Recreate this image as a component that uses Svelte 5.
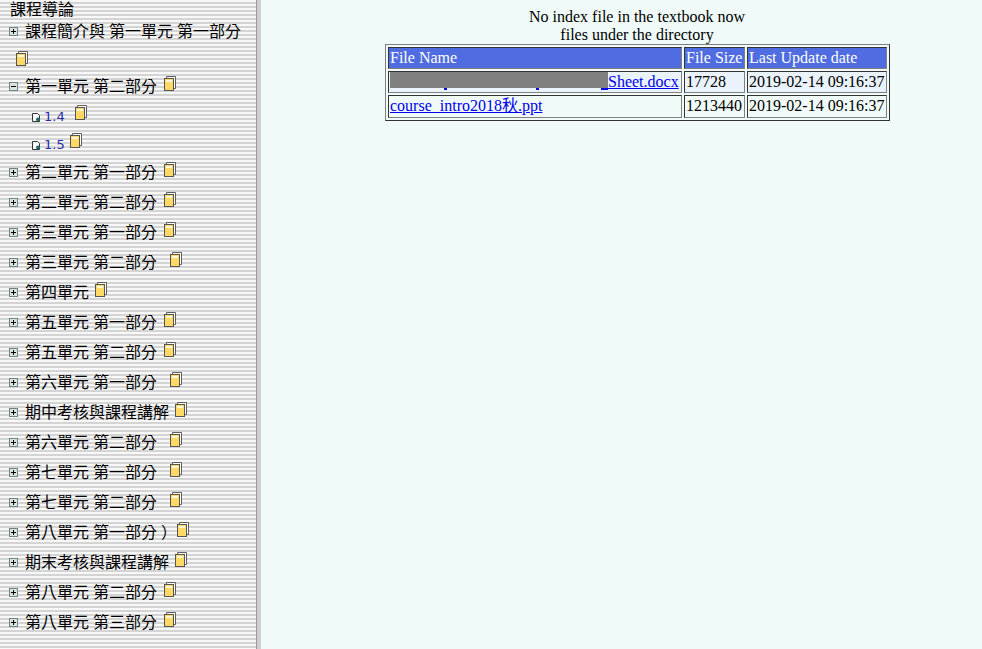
<script lang="ts">
  type Node = { label: string; gap?: number };

  const nodes: Node[] = [
    { label: '第二單元 第一部分' },
    { label: '第二單元 第二部分' },
    { label: '第三單元 第一部分' },
    { label: '第三單元 第二部分', gap: 13 },
    { label: '第四單元', gap: 6 },
    { label: '第五單元 第一部分' },
    { label: '第五單元 第二部分' },
    { label: '第六單元 第一部分', gap: 13 },
    { label: '期中考核與課程講解', gap: 6 },
    { label: '第六單元 第二部分', gap: 13 },
    { label: '第七單元 第一部分', gap: 13 },
    { label: '第七單元 第二部分', gap: 13 },
    { label: '第八單元 第一部分 ）', gap: 0 },
    { label: '期末考核與課程講解', gap: 6 },
    { label: '第八單元 第二部分' },
    { label: '第八單元 第三部分' }
  ];

  const files = [
    { size: 17728, date: '2019-02-14 09:16:37' },
    { size: 1213440, date: '2019-02-14 09:16:37' }
  ];
</script>

{#snippet book()}
  <svg class="book" width="12" height="15" viewBox="0 0 12 15">
    <path d="M2.5 2.5v-2h9v12h-2" fill="#fff" stroke="#5e5e5e" />
    <rect x=".5" y="2.5" width="9" height="12" fill="#ffd966" stroke="#555" />
    <rect x="2" y="4" width="6" height="2" fill="#fff8dc" />
  </svg>
{/snippet}

{#snippet toggle(open: boolean)}
  <svg class="toggle" width="9" height="9" viewBox="0 0 9 9">
    <rect x=".5" y=".5" width="8" height="8" fill="#dae2e2" stroke="#6f8585" />
    <path d={open ? 'M2 4.5h5' : 'M2 4.5h5M4.5 2v5'} stroke="#000" />
  </svg>
{/snippet}

{#snippet page()}
  <svg class="page" width="9" height="9" viewBox="0 0 9 9">
    <path d="M.5 .5h5l2 2v6h-7z" fill="#fff" stroke="#333" />
    <circle cx="6" cy="6.5" r="2" fill="#1c6b6b" />
  </svg>
{/snippet}

<div class="layout">
  <nav class="tree">
    <div class="title">課程導論</div>

    <div class="node first">
      <div class="line">{@render toggle(false)}<span class="label">課程簡介與 第一單元 第一部分</span></div>
      <div class="wrapped">{@render book()}</div>
    </div>

    <div class="node">
      {@render toggle(true)}<span class="label">第一單元 第二部分</span><span class="book-gap"></span>{@render book()}
    </div>
    <div class="leaf">
      {@render page()}<a href="#1.4">1.4</a><span class="leaf-book wide">{@render book()}</span>
    </div>
    <div class="leaf">
      {@render page()}<a href="#1.5">1.5</a><span class="leaf-book">{@render book()}</span>
    </div>

    {#each nodes as node}
      <div class="node">
        {@render toggle(false)}<span class="label">{node.label}</span><span class="book-gap" style="width: {node.gap ?? 7}px"></span>{@render book()}
      </div>
    {/each}
  </nav>

  <main class="content">
    <div class="notice">No index file in the textbook now<br />files under the directory</div>
    <table>
      <thead>
        <tr>
          <th class="col-name">File Name</th>
          <th class="col-size">File Size</th>
          <th class="col-date">Last Update date</th>
        </tr>
      </thead>
      <tbody>
        <tr class="odd">
          <td>
            <a href="#sheet"><span class="redacted"><i class="tail t1"></i><i class="tail t2"></i><i class="tail t3"></i></span>Sheet.docx</a>
          </td>
          <td>{files[0].size}</td>
          <td>{files[0].date}</td>
        </tr>
        <tr class="tall">
          <td><a href="#ppt">course_intro2018秋.ppt</a></td>
          <td>{files[1].size}</td>
          <td>{files[1].date}</td>
        </tr>
      </tbody>
    </table>
  </main>
</div>

<style>
  :global(body) {
    margin: 0;
    overflow: hidden;
  }

  .layout {
    display: flex;
    height: 649px;
    font-family: "Liberation Serif", "Noto Sans CJK TC", serif;
    font-size: 16px;
    color: #000;
  }

  /* Left frame */
  .tree {
    width: 257px;
    flex: none;
    overflow: hidden;
    border-right: 4px solid #cfcfcf;
    box-shadow: inset -1px 0 #999;
    background: repeating-linear-gradient(to bottom, #f8f8f8 0 2px, #d4d4d4 2px 4px);
  }

  .title {
    padding-left: 10px;
    height: 20px;
    line-height: 20px;
  }

  .node {
    display: flex;
    align-items: center;
    height: 30px;
    padding-left: 9px;
    white-space: nowrap;
  }

  .node.first {
    display: block;
    height: 51px;
  }

  .line {
    display: flex;
    align-items: center;
    height: 22px;
  }

  .label {
    margin-bottom: 2px;
  }

  .wrapped {
    display: flex;
    padding: 14px 0 0 7px;
  }

  .toggle {
    margin-right: 7px;
    flex: none;
  }

  .book {
    display: block;
    flex: none;
    margin-top: -5px;
  }

  .book-gap {
    flex: none;
    width: 7px;
  }

  .leaf {
    display: flex;
    align-items: center;
    height: 28px;
    padding-left: 32px;
  }

  .leaf a {
    margin: 3px 0 0 3px;
    font-family: "DejaVu Sans", sans-serif;
    font-size: 13px;
    color: #2a2aa8;
    text-decoration: none;
  }

  .page {
    flex: none;
    margin-top: 4px;
  }

  .leaf-book {
    margin-left: 5px;
  }

  .leaf-book.wide {
    margin-left: 10px;
  }

  /* Right frame */
  .content {
    flex: 1;
    min-width: 0;
    padding: 8px 0 0 33px;
    background: #f0fbf9;
    overflow: hidden;
  }

  .notice {
    width: 686px;
    text-align: center;
    line-height: 18px;
  }

  table {
    width: 505px;
    margin-left: 91px;
    table-layout: fixed;
    border-collapse: separate;
    border-spacing: 2px;
    border: 1px solid;
    border-color: #808080 #333 #333 #808080;
  }

  th,
  td {
    padding: 1px;
    border: 1px solid;
    border-color: #333 #808080 #808080 #333;
    text-align: left;
    font-weight: normal;
    white-space: nowrap;
    line-height: 18px;
  }

  th {
    background: #4f6de0;
    color: #fff;
  }

  .col-name {
    width: 290px;
  }

  .col-size {
    width: 57px;
  }

  .col-date {
    width: 136px;
  }

  .odd td {
    background: #eaf2fb;
  }

  .tall td {
    height: 19px;
    vertical-align: top;
  }

  td a {
    color: #00e;
  }

  .redacted {
    position: relative;
    display: inline-block;
    width: 218px;
    height: 16px;
    margin-top: -2px;
    vertical-align: -1px;
    background: #808080;
  }

  /* descenders peeking out under the grey block */
  .tail {
    position: absolute;
    top: 100%;
    height: 2px;
    background: #00e;
  }

  .t1 {
    left: 54px;
    width: 3px;
  }

  .t2 {
    left: 146px;
    width: 3px;
  }

  .t3 {
    left: 211px;
    width: 7px;
  }
</style>
